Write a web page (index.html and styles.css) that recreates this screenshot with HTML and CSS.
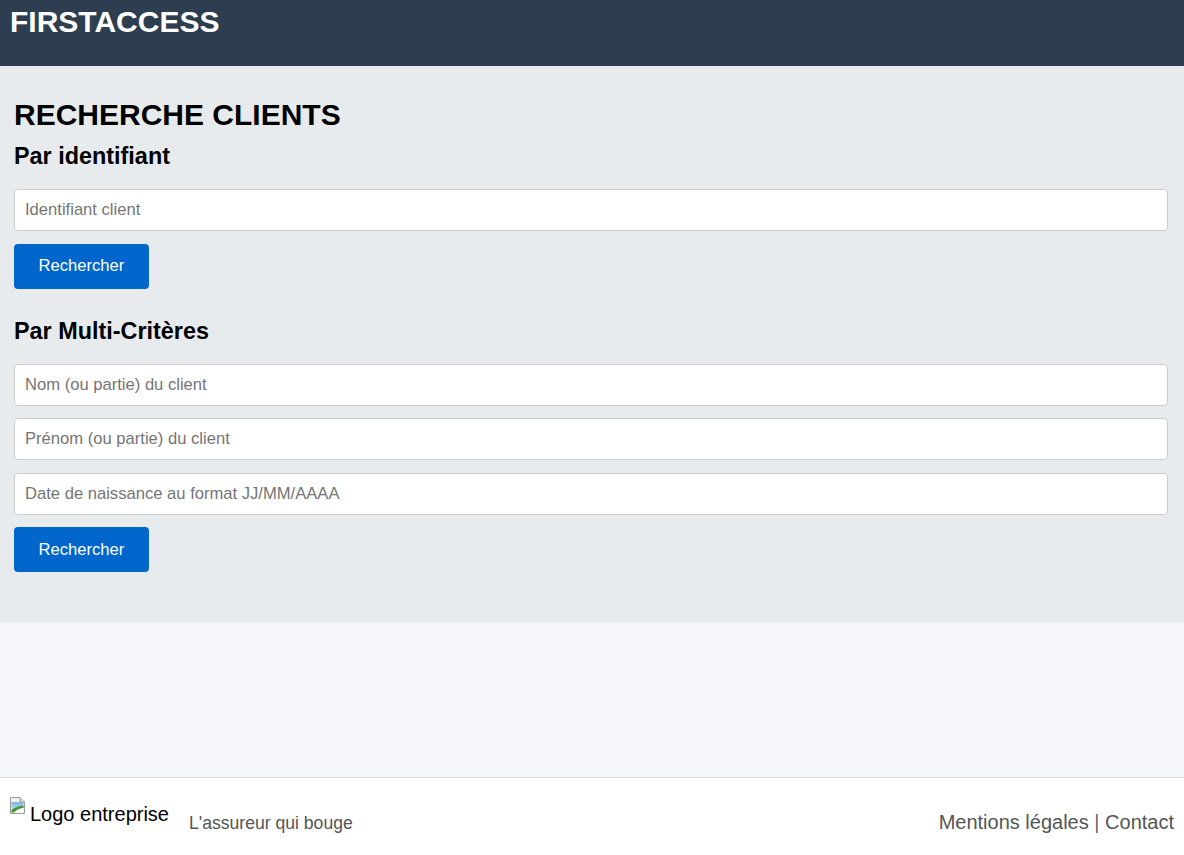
FILE: index.html
```html
<!DOCTYPE html>
<html lang="fr">
<head>
<meta charset="utf-8">
<title>FirstAccess - Recherche clients</title>
<link rel="stylesheet" href="styles.css">
</head>
<body>
<header class="topbar">
  <h1 class="brand">FIRSTACCESS</h1>
</header>
<main class="search">
  <h2 class="page-title">RECHERCHE CLIENTS</h2>
  <h3 class="section-title">Par identifiant</h3>
  <form class="search-form">
    <input class="field" type="text" placeholder="Identifiant client">
    <button class="btn" type="button">Rechercher</button>
  </form>
  <h3 class="section-title section-title--second">Par Multi-Critères</h3>
  <form class="search-form">
    <input class="field" type="text" placeholder="Nom (ou partie) du client">
    <input class="field" type="text" placeholder="Prénom (ou partie) du client">
    <input class="field" type="text" placeholder="Date de naissance au format JJ/MM/AAAA">
    <button class="btn" type="button">Rechercher</button>
  </form>
</main>
<div class="spacer"></div>
<footer class="footer">
  <div class="footer-left">
    <span class="logo">
      <svg class="broken-icon" width="16" height="17" viewBox="0 0 16 17" aria-hidden="true">
        <defs>
          <linearGradient id="sky" x1="0" y1="0" x2="0" y2="1">
            <stop offset="0" stop-color="#7fb2de"/>
            <stop offset="1" stop-color="#d6e8f5"/>
          </linearGradient>
        </defs>
        <path d="M1.5 0.5h9.5l4.5 4.5v11.5h-14z" fill="#f2f2f2" stroke="#9a9a9a"/>
        <path d="M11 0.5v4.5h4.5" fill="#dcdcdc" stroke="#9a9a9a"/>
        <rect x="2.5" y="5" width="12" height="10.5" fill="url(#sky)"/>
        <path d="M2.5 15.5 L2.5 13 Q7 9 14.5 8.5 L14.5 11 Q9 11.5 5 15.5 Z" fill="#3f9b3a"/>
        <path d="M5 15.5 Q9 11.5 14.5 11 L14.5 15.5 Z" fill="#ffffff"/>
      </svg><span class="logo-alt">Logo entreprise</span>
    </span>
    <span class="tagline">L'assureur qui bouge</span>
  </div>
  <nav class="footer-links">
    <a href="#" class="footer-link">Mentions légales</a> | <a href="#" class="footer-link">Contact</a>
  </nav>
</footer>
</body>
</html>
```
FILE: styles.css
```css
* { box-sizing: border-box; }
html, body { margin: 0; padding: 0; }
body {
  font-family: "Liberation Sans", Arial, sans-serif;
  background: #ffffff;
  color: #000;
}
.topbar {
  height: 66px;
  background: #2c3e50;
  padding: 5px 10px 0;
}
.brand {
  margin: 0;
  color: #ffffff;
  font-size: 30px;
  line-height: 34px;
  font-weight: bold;
}
.search {
  background: #e8ebee;
  padding: 32px 16px 50px 14px;
}
.page-title {
  margin: 0;
  font-size: 30px;
  line-height: 34px;
  font-weight: bold;
}
.section-title {
  margin: 11px 0 19px;
  font-size: 23.4px;
  line-height: 27px;
  font-weight: bold;
}
.section-title--second {
  margin-top: 29px;
}
.search-form {
  display: flex;
  flex-direction: column;
  align-items: flex-start;
  gap: 12.5px;
}
.field {
  width: 100%;
  height: 42px;
  padding: 0 10px;
  border: 1px solid #cccccc;
  border-radius: 4px;
  background: #ffffff;
  font-family: "Liberation Sans", Arial, sans-serif;
  font-size: 16.6px;
  color: #333;
}
.field::placeholder { color: #757575; }
.btn {
  height: 45px;
  padding: 0 24.5px;
  background: #0066cc;
  color: #ffffff;
  border: none;
  border-radius: 4px;
  font-family: "Liberation Sans", Arial, sans-serif;
  font-size: 16.6px;
  cursor: pointer;
}
.spacer {
  height: 155px;
  background: #f4f6fa;
}
.footer {
  border-top: 1px solid #dddddd;
  background: #ffffff;
  display: flex;
  justify-content: space-between;
  align-items: flex-start;
  padding: 19px 10px 20px 9px;
}
.footer-left {
  display: flex;
  align-items: flex-start;
  gap: 20px;
}
.logo {
  display: inline-flex;
  align-items: flex-start;
  font-size: 20px;
  line-height: 23px;
  color: #000;
}
.broken-icon { flex: none; }
.logo-alt { margin-top: 6px; margin-left: 5px; }
.tagline {
  font-size: 17.6px;
  line-height: 21px;
  color: #555555;
  margin-top: 16px;
}
.footer-links {
  font-size: 20px;
  line-height: 23px;
  color: #666666;
  margin-top: 14px;
}
.footer-link {
  color: #555555;
  text-decoration: none;
}
```
